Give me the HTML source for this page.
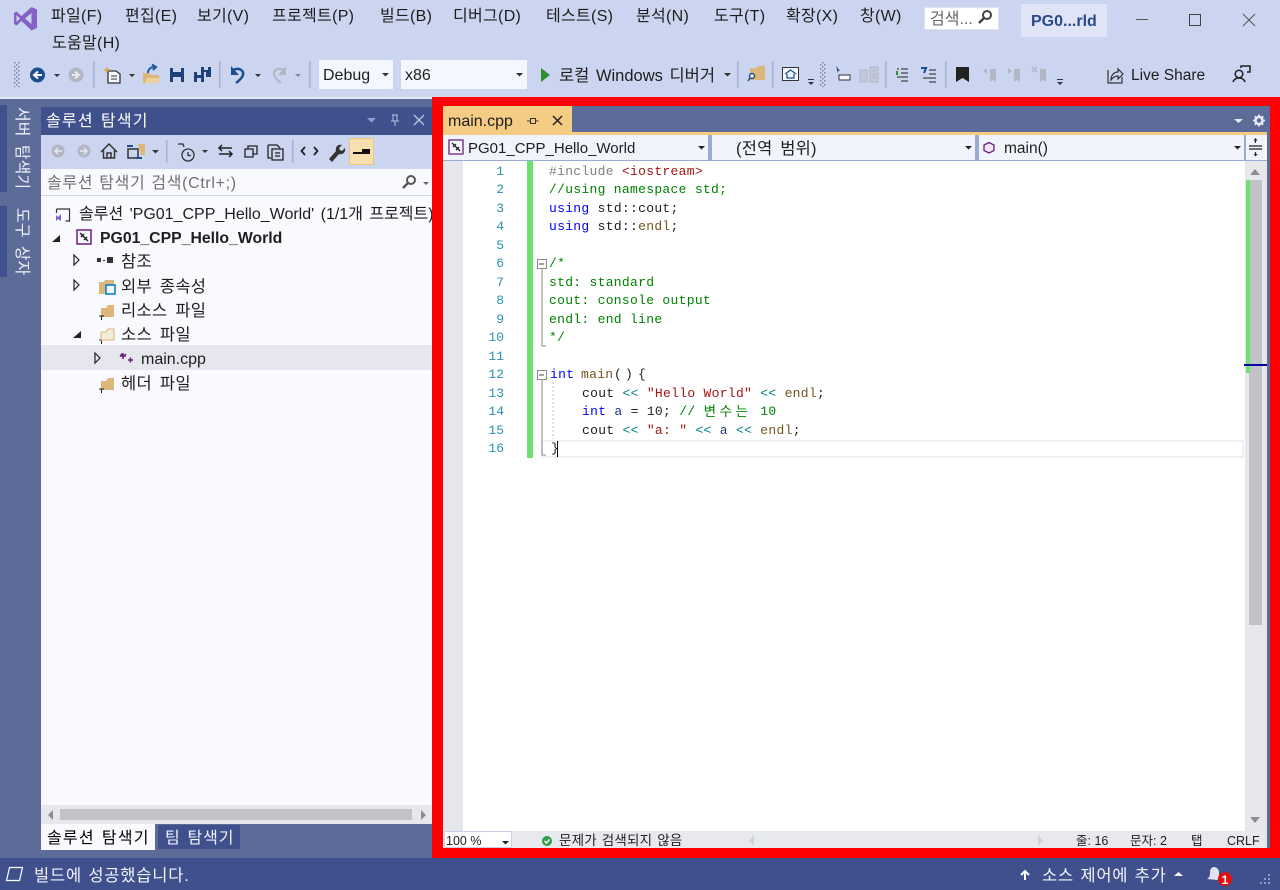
<!DOCTYPE html>
<html lang="ko"><head><meta charset="utf-8"><title>main.cpp</title>
<style>
html,body{margin:0;padding:0}
body{width:1280px;height:890px;position:relative;overflow:hidden;background:#5d6b99;font-family:"Liberation Sans","Noto Sans CJK KR",sans-serif;color:#1e1e1e}
div,span.t{position:absolute}
.t{white-space:nowrap;line-height:20px;font-size:16px;margin-top:1.5px}
.m{font-size:16px;letter-spacing:.3px}
.s{font-size:16px;letter-spacing:1.2px;word-spacing:1.5px}
.h{font-size:16.5px;letter-spacing:.3px;word-spacing:3px}
.q{font-size:16.5px;letter-spacing:.8px;word-spacing:1px}
.u{font-size:13.5px;margin-top:1px}
.c{position:absolute;white-space:pre;font:13px/18px "Liberation Mono","Noto Sans CJK KR",monospace;letter-spacing:.3px;color:#1e1e1e;margin-top:.5px}
.n{position:absolute;left:470px;width:34px;text-align:right;font:13px/18px "Liberation Mono",monospace;color:#2b91af;margin-top:.5px}
.g{color:#008000}.b{color:#0000ff}.r{color:#a31515}.p{color:#808080}.f{color:#74531f}.o{color:#008080}.v{color:#1f377f}
.k{display:inline-block;width:48.6px;font:13.5px/18px "Noto Sans CJK KR",sans-serif;letter-spacing:3.6px;color:#008000;vertical-align:top;position:relative;top:-2px}
svg{position:absolute;left:0;top:0}
</style></head><body>
<div style="left:0;top:0;width:1280px;height:97px;background:#ccd5f0"></div>
<div style="left:0;top:97px;width:433px;height:2px;background:#e6ebf8"></div>
<div style="left:0;top:99px;width:433px;height:8px;background:#5d6b99"></div>

<span class="t m" style="left:51px;top:5px">파일(F)</span>
<span class="t m" style="left:125px;top:5px">편집(E)</span>
<span class="t m" style="left:197px;top:5px">보기(V)</span>
<span class="t m" style="left:272px;top:5px">프로젝트(P)</span>
<span class="t m" style="left:380px;top:5px">빌드(B)</span>
<span class="t m" style="left:453px;top:5px">디버그(D)</span>
<span class="t m" style="left:546px;top:5px">테스트(S)</span>
<span class="t m" style="left:636px;top:5px">분석(N)</span>
<span class="t m" style="left:714px;top:5px">도구(T)</span>
<span class="t m" style="left:786px;top:5px">확장(X)</span>
<span class="t m" style="left:860px;top:5px">창(W)</span>
<span class="t m" style="left:52px;top:32px">도움말(H)</span>

<div style="left:924px;top:7px;width:75px;height:23px;background:#fff;border:1px solid #dfe4f3;box-sizing:border-box"></div>
<span class="t" style="left:930px;top:8px;color:#666">검색...</span>
<div style="left:1021px;top:4px;width:86px;height:33px;background:#dfe5f7"></div>
<span class="t" style="left:1031px;top:10px;font-weight:bold;color:#2a4a8c">PG0...rld</span>

<div style="left:319px;top:60px;width:74px;height:29px;background:#f5f7ff"></div>
<span class="t" style="left:323px;top:64px">Debug</span>
<div style="left:401px;top:60px;width:126px;height:29px;background:#f5f7ff"></div>
<span class="t" style="left:405px;top:64px">x86</span>
<span class="t" style="left:559px;top:64px;font-size:16.5px;word-spacing:2px">로컬 Windows 디버거</span>
<span class="t" style="left:1131px;top:64px;font-size:15.5px">Live Share</span>

<!-- left strip -->
<div style="left:0;top:105px;width:7px;height:87px;background:#40508d"></div>
<div style="left:0;top:206px;width:7px;height:71px;background:#40508d"></div>
<span class="t" style="left:11px;top:107px;margin-top:0;writing-mode:vertical-rl;text-orientation:sideways;color:#eef1fb;font-size:16px;line-height:20px;word-spacing:4px">서버 탐색기</span>
<span class="t" style="left:11px;top:208px;margin-top:0;writing-mode:vertical-rl;text-orientation:sideways;color:#eef1fb;font-size:16px;line-height:20px;word-spacing:4px">도구 상자</span>

<!-- solution panel -->
<div style="left:41px;top:107px;width:392px;height:28px;background:#40508d"></div>
<span class="t s" style="left:46px;top:110.500px;color:#fff">솔루션 탐색기</span>
<div style="left:41px;top:135px;width:392px;height:34px;background:#ccd5f0"></div>
<div style="left:41px;top:169px;width:392px;height:27px;background:#f9faff;border-bottom:1px solid #d5dbee;box-sizing:border-box"></div>
<span class="t" style="left:47px;top:172px;color:#717171;letter-spacing:.65px;word-spacing:1px">솔루션 탐색기 검색(Ctrl+;)</span>
<div style="left:41px;top:196px;width:392px;height:609px;background:#f9faff;overflow:hidden">
  <div style="left:0;top:149px;width:392px;height:25px;background:#e6e7ee"></div>
  <span class="t" style="left:38px;top:7px;word-spacing:2px">솔루션 'PG01_CPP_Hello_World' (1/1개 프로젝트)</span>
  <span class="t" style="left:59px;top:31px;font-weight:bold;font-size:15.800px">PG01_CPP_Hello_World</span>
  <span class="t h" style="left:80px;top:54px">참조</span>
  <span class="t h" style="left:80px;top:79px">외부 종속성</span>
  <span class="t h" style="left:80px;top:103px">리소스 파일</span>
  <span class="t h" style="left:80px;top:127px">소스 파일</span>
  <span class="t" style="left:100px;top:152px">main.cpp</span>
  <span class="t h" style="left:80px;top:176px">헤더 파일</span>
</div>
<div style="left:41px;top:805px;width:392px;height:19px;background:#e8e8ec"></div>
<div style="left:60px;top:809px;width:352px;height:11px;background:#c2c3c9"></div>
<div style="left:41px;top:824px;width:114px;height:26px;background:#f9faff"></div>
<span class="t s" style="left:47px;top:827.500px;color:#000">솔루션 탐색기</span>
<div style="left:158px;top:825px;width:82px;height:24px;background:#40508d"></div>
<span class="t s" style="left:165px;top:827.500px;color:#eef1fb;letter-spacing:.9px">팀 탐색기</span>

<!-- status -->
<div style="left:0;top:858px;width:1280px;height:32px;background:#40508d"></div>
<span class="t q" style="left:34px;top:864px;color:#f2f4fb">빌드에 성공했습니다.</span>
<span class="t q" style="left:1042px;top:864px;color:#f2f4fb">소스 제어에 추가</span>

<!-- editor frame -->
<div style="left:432px;top:97px;width:848px;height:761px;background:#ff0000"></div>
<div style="left:443px;top:106px;width:827px;height:742px;background:#5d6b99"></div>
<div style="left:443px;top:106px;width:129px;height:27px;background:#f5cc84"></div>
<div style="left:443px;top:132px;width:824px;height:3px;background:#f5cc84"></div>
<span class="t" style="left:448px;top:110px">main.cpp</span>
<div style="left:443px;top:135px;width:824px;height:26px;background:#f2f4fd"></div>
<div style="left:708px;top:135px;width:4px;height:26px;background:#9aaad2"></div>
<div style="left:975px;top:135px;width:4px;height:26px;background:#9aaad2"></div>
<div style="left:1244px;top:135px;width:2px;height:26px;background:#9aaad2"></div>
<div style="left:443px;top:160px;width:824px;height:1px;background:#9aaad2"></div>
<span class="t" style="left:468px;top:137px;font-size:15px">PG01_CPP_Hello_World</span>
<span class="t" style="left:736px;top:137px;font-size:16.500px;word-spacing:3px;letter-spacing:.2px">(전역 범위)</span>
<span class="t" style="left:1004px;top:137px;font-size:15.500px">main()</span>

<div style="left:443px;top:161px;width:824px;height:670px;background:#fff"></div>
<div style="left:443px;top:161px;width:20px;height:670px;background:#e6e7ed"></div>
<div style="left:527px;top:161px;width:6px;height:297px;background:#6ee06e"></div>
<div style="left:541px;top:440px;width:703px;height:18px;border:2px solid #eeeef5;box-sizing:border-box"></div>

<div class="n" style="top:162px">1</div><div class="n" style="top:180.5px">2</div><div class="n" style="top:199px">3</div><div class="n" style="top:217.5px">4</div>
<div class="n" style="top:236px">5</div><div class="n" style="top:254.5px">6</div><div class="n" style="top:273px">7</div><div class="n" style="top:291.5px">8</div>
<div class="n" style="top:310px">9</div><div class="n" style="top:328.5px">10</div><div class="n" style="top:347px">11</div><div class="n" style="top:365.5px">12</div>
<div class="n" style="top:384px">13</div><div class="n" style="top:402.5px">14</div><div class="n" style="top:421px">15</div><div class="n" style="top:439.5px">16</div>

<div class="c" style="left:549px;top:162px"><span class="p">#include </span><span class="r">&lt;iostream&gt;</span></div>
<div class="c g" style="left:549px;top:180.5px">//using namespace std;</div>
<div class="c" style="left:549px;top:199px"><span class="b">using</span> std::cout;</div>
<div class="c" style="left:549px;top:217.5px"><span class="b">using</span> std::<span class="f">endl</span>;</div>
<div class="c g" style="left:549px;top:254.5px">/*</div>
<div class="c g" style="left:549px;top:273px">std: standard</div>
<div class="c g" style="left:549px;top:291.5px">cout: console output</div>
<div class="c g" style="left:549px;top:310px">endl: end line</div>
<div class="c g" style="left:549px;top:328.5px">*/</div>
<div class="c b" style="left:550px;top:365.5px">int</div>
<div class="c f" style="left:581px;top:365.5px">main</div>
<div class="c" style="left:614px;top:365.5px">(</div>
<div class="c" style="left:625px;top:365.5px">)</div>
<div class="c" style="left:638px;top:365.5px">{</div>
<div class="c" style="left:582px;top:384px">cout <span class="o">&lt;&lt;</span> <span class="r">"Hello World"</span> <span class="o">&lt;&lt;</span> <span class="f">endl</span>;</div>
<div class="c" style="left:582px;top:402.5px"><span class="b">int</span> <span class="v">a</span> = 10; <span class="g">// </span><span class="k">변수는</span><span class="g"> 10</span></div>
<div class="c" style="left:582px;top:421px">cout <span class="o">&lt;&lt;</span> <span class="r">"a: "</span> <span class="o">&lt;&lt;</span> <span class="v">a</span> <span class="o">&lt;&lt;</span> <span class="f">endl</span>;</div>
<div class="c" style="left:551px;top:439.5px">}</div>
<div style="left:557px;top:441px;width:1px;height:16px;background:#000"></div>

<!-- editor scrollbar -->
<div style="left:1245px;top:161px;width:22px;height:670px;background:#e8e8ec"></div>
<div style="left:1249px;top:180px;width:13px;height:445px;background:#c2c3c9"></div>
<div style="left:1246px;top:180px;width:4px;height:193px;background:#6ee06e"></div>
<div style="left:1244px;top:364px;width:23px;height:2px;background:#00009e"></div>

<!-- editor bottom row -->
<div style="left:443px;top:831px;width:824px;height:17px;background:#e8e9ef"></div>
<div style="left:444px;top:831px;width:68px;height:17px;background:#fff;border:1px solid #c8d0e8;box-sizing:border-box"></div>
<span class="t u" style="left:446px;top:830px;font-size:12.500px">100 %</span>
<span class="t u" style="left:559px;top:830px;word-spacing:1px;letter-spacing:.2px">문제가 검색되지 않음</span>
<span class="t u" style="left:1076px;top:830px;font-size:12.500px">줄: 16</span>
<span class="t u" style="left:1130px;top:830px;font-size:12.500px">문자: 2</span>
<span class="t u" style="left:1191px;top:830px;font-size:12.500px">탭</span>
<span class="t u" style="left:1227px;top:830px;font-size:12.500px">CRLF</span>

<svg width="1280" height="890" viewBox="0 0 1280 890">
<defs>
<pattern id="grip" width="4" height="4" patternUnits="userSpaceOnUse"><rect width="1.500" height="1.500" fill="#7b86a6"/><rect x="2" y="2" width="1.500" height="1.500" fill="#7b86a6"/></pattern>
</defs>
<!-- logo -->
<path fill="#8561c5" fill-rule="evenodd" d="M31.500 7 37 9.500v18.500L31.500 30.500 21.500 21 16.500 25.500 14 24V13l2.500-1.500 5 4.500zM16.500 15v7l3.500-3.500zM31.500 13l-6.500 5.500 6.500 5.500z"/>
<!-- search magnifier -->
<g fill="none" stroke="#444" stroke-width="2"><circle cx="987" cy="15" r="4"/><path d="M984 18l-5 5" stroke-width="2.500"/></g>
<!-- window buttons -->
<path d="M1136 19.500h12" stroke="#555" fill="none"/>
<rect x="1189.500" y="14.500" width="11" height="11" fill="none" stroke="#444"/>
<path d="M1243 14l12 12M1255 14l-12 12" stroke="#555" fill="none"/>
<!-- grips -->
<rect x="14" y="62" width="6" height="25" fill="url(#grip)"/>
<rect x="820" y="62" width="6" height="25" fill="url(#grip)"/>
<!-- toolbar seps -->
<g fill="#a3b1d3"><rect x="93" y="61" width="1.500" height="27"/><rect x="219" y="61" width="1.500" height="27"/><rect x="309" y="61" width="1.500" height="27"/><rect x="737" y="61" width="1.500" height="27"/><rect x="772" y="61" width="1.500" height="27"/><rect x="885" y="61" width="1.500" height="27"/><rect x="945" y="61" width="1.500" height="27"/><rect x="166" y="140" width="1.500" height="23"/><rect x="292" y="140" width="1.500" height="23"/></g>
<!-- back/forward -->
<circle cx="37.500" cy="75" r="7.500" fill="#1c4e8d"/><path d="M42 75h-7M38 71.500 34 75l4 3.500" stroke="#fff" stroke-width="2" fill="none"/>
<circle cx="76" cy="75" r="7.500" fill="#b3b7c4"/><path d="M72 75h7M75 71.500 79 75l-4 3.500" stroke="#e9ebf2" stroke-width="2" fill="none"/>
<!-- drops -->
<g fill="#333"><path d="M54 74h6l-3 3zM129 74h6l-3 3zM255 74h6l-3 3zM382 73h7l-3.500 3.500zM516 73h7l-3.500 3.500zM724 73h7l-3.500 3.500zM152 150h7l-3.500 3.500zM202 150h6l-3 3z"/></g>
<path d="M295 74h6l-3 3z" fill="#888"/>
<!-- new project -->
<path d="M108 71h8l4 3v9h-12z" fill="#f5f7ff" stroke="#333" stroke-width="1.300"/>
<path d="M107 66l1 3 3 1-3 1-1 3-1-3-3-1 3-1z" fill="#d9a640"/><path d="M111 76h6M111 79h6" stroke="#333"/>
<!-- open -->
<path d="M143 73h6l2 2h8v8h-16z" fill="#dcb67a"/><path d="M145 83l2-5h13l-2 5z" fill="#efd19c"/>
<path d="M148 73c0-4 3-6 7-6M152 64.500 156 67l-3 3" stroke="#1c5a9c" stroke-width="2" fill="none"/>
<!-- save -->
<path fill="#1c4278" fill-rule="evenodd" d="M170 68h14v14h-14zM173 68v4h8v-4zM173 77v5h8v-5z"/>
<path fill="#1c4278" fill-rule="evenodd" d="M194 72h10v10h-10zM197 72v3h4v-3zM197 78v4h4v-4z"/><path fill="#1c4278" fill-rule="evenodd" d="M201 67h10v10h-5v-5h-5zM204 67v3h4v-3z"/>
<!-- undo / redo -->
<path d="M233 70c7-3 11 1 10 5-1 3-3 5-7 8" fill="none" stroke="#1c4e8d" stroke-width="2.500"/><path d="M231 66v9h8z" fill="#1c4e8d"/>
<path d="M284 70c-7-3-11 1-10 5 1 3 3 5 7 8" fill="none" stroke="#b3b7c4" stroke-width="2"/><path d="M286 66v9h-8z" fill="#b3b7c4"/>
<!-- play -->
<path d="M541 68l9 7-9 7z" fill="#2f8f2f"/>
<!-- find folder -->
<path d="M750 68h6l2-2h7v14h-15z" fill="#dcb67a"/><circle cx="752" cy="76" r="2.500" fill="#f5f7ff" stroke="#1c4e8d" stroke-width="1.500"/><path d="M750 78l-2 3" stroke="#1c4e8d" stroke-width="1.500"/>
<!-- home box -->
<rect x="782.500" y="67.500" width="16" height="13" fill="#f5f7ff" stroke="#333"/><path d="M785 74l5.500-4 5.500 4M787 74v4h7v-4" fill="none" stroke="#1c4e8d" stroke-width="1.300"/>
<g fill="#333"><rect x="808" y="79" width="6" height="1"/><path d="M808 82h6l-3 3z"/><rect x="1057" y="79" width="6" height="1"/><path d="M1057 82h6l-3 3z"/></g>
<!-- step icons -->
<path d="M836 66l4 5-2 0 0 3z" fill="#1c4e8d"/><path d="M839 75h11v5h-11z" fill="#f5f7ff" stroke="#333"/>
<path d="M860 70h7v12h-7zM870 67h8v15h-8zM872 71h4M872 74h4M872 77h4" fill="#c3c9d8" stroke="#b0b6c6"/>
<path d="M897 69h2M901 69h7M901 73h7M897 77h11M901 81h7" stroke="#222" fill="none"/><path d="M897 71v4" stroke="#2f8f2f" stroke-width="2"/>
<path d="M921 68h5l-2 5" fill="none" stroke="#1c4e8d" stroke-width="2"/><path d="M929 70h7M929 74h7M923 78h13M929 82h7" stroke="#222" fill="none"/>
<!-- bookmarks -->
<path d="M956 67h13v15l-6.500-4-6.500 4z" fill="#222"/>
<g fill="#b3b7c4"><path d="M990 69h6v13l-3-2-3 2zM983 71l4-3v6z"/><path d="M1014 69h6v13l-3-2-3 2zM1008 68l4 3-4 3z"/><path d="M1040 69h6v13l-3-2-3 2z"/></g>
<path d="M1032 67l5 5M1037 67l-5 5" stroke="#b3b7c4" stroke-width="1.500"/>
<!-- live share -->
<path d="M1108 70v13h14v-6" fill="none" stroke="#333" stroke-width="1.200"/><path d="M1111 80c0-5 3-8 7-8v-3l5 5-5 5v-3c-3 0-5 1-7 4z" fill="none" stroke="#333" stroke-width="1.200"/>
<!-- feedback person -->
<circle cx="1239" cy="74" r="3.800" fill="none" stroke="#222" stroke-width="1.500"/><path d="M1233 82c1-3 3-4 6-4s5 1 6 4" fill="none" stroke="#222" stroke-width="1.500"/><path d="M1241 68v-2h9v6h-3" fill="none" stroke="#222" stroke-width="1.500"/>

<!-- panel title -->
<path d="M367 118h9l-4.500 4.500z" fill="#8ea0cf"/>
<path d="M392 115h6M393 115v6h4v-6M391 121h8M395 121v5" stroke="#b8c4e4" fill="none"/>
<path d="M414 115l10 10M424 115l-10 10" stroke="#b8c4e4" stroke-width="1.400"/>
<!-- panel toolbar -->
<circle cx="58" cy="151" r="6.500" fill="#b3b7c4"/><path d="M62 151h-7M58 148l-3 3 3 3" stroke="#e5e8f2" stroke-width="1.500" fill="none"/>
<circle cx="84" cy="151" r="6.500" fill="#b3b7c4"/><path d="M80 151h7M84 148l3 3-3 3" stroke="#e5e8f2" stroke-width="1.500" fill="none"/>
<path d="M101 152l8-8 8 8M103.500 150v8h11v-8M107 158v-5h4v5" fill="none" stroke="#333" stroke-width="1.500"/>
<rect x="128" y="149" width="10" height="9" fill="none" stroke="#333" stroke-width="1.500"/><path d="M138 144h7v11h-4z" fill="#dcb67a"/><path d="M127 146h6M142 158h-6" stroke="#1c4e8d" stroke-width="2"/>
<circle cx="188" cy="155" r="6" fill="none" stroke="#333" stroke-width="1.300"/><path d="M188 152v3.500h3M178 144h5l1 3" fill="none" stroke="#333" stroke-width="1.300"/>
<path d="M219 148h13M222 145l-3 3 3 3M232 154h-13M229 151l3 3-3 3" fill="none" stroke="#222" stroke-width="1.500"/>
<path d="M245 149h8v8h-8zM248 149v-3h9v8h-4" fill="none" stroke="#222" stroke-width="1.300"/>
<path d="M268 145h9l3 3M268 145v13h3" fill="none" stroke="#222" stroke-width="1.300"/><path d="M272 149h11v11h-11zM275 153h5M275 156h5" fill="none" stroke="#222" stroke-width="1.300"/>
<path d="M305 147l-3.500 4 3.500 4M314 147l3.500 4-3.500 4" fill="none" stroke="#222" stroke-width="1.800"/>
<path d="M329 159l7-8c-1-4 2-7 6-6l-3 3 1 2 2 1 3-3c1 4-2 7-6 6l-7 8z" fill="#333"/>
<rect x="349.500" y="138.500" width="24" height="26" fill="#f7dfb0" stroke="#e6c77c"/>
<rect x="353" y="152" width="17" height="2" fill="#111"/><rect x="362" y="149" width="8" height="3" fill="#111"/>
<!-- search in panel -->
<circle cx="411" cy="180" r="4" fill="none" stroke="#555" stroke-width="2"/><path d="M408 183l-5 5" stroke="#555" stroke-width="2.500"/>
<path d="M423 182h6l-3 3z" fill="#666"/>
<!-- tree icons -->
<path d="M56.500 209h13v12h-4M56.500 213v-4" fill="none" stroke="#333" stroke-width="1.200"/><path d="M56 215l2 2 3-3v7l-3-2-2 2z" fill="#8561c5"/>
<path d="M52 242h8v-7z" fill="#222"/>
<rect x="77" y="230" width="14" height="14" fill="#f5f7ff" stroke="#68217a" stroke-width="1.500"/><path d="M80 233l4 4 4 4M81 237l3-3M84 240l3-3" stroke="#222" stroke-width="1.500" fill="none"/>
<g fill="none" stroke="#222" stroke-width="1.200"><path d="M74 255l5 5-5 5zM74 280l5 5-5 5zM95 353l5 5-5 5z"/></g>
<path d="M73 338h8v-7z" fill="#222"/>
<rect x="97" y="258" width="4" height="4" fill="#333"/><rect x="103" y="260" width="2" height="1" fill="#333"/><rect x="107" y="257" width="6" height="6" fill="#333"/>
<path d="M99 282h5l1-2h9v14H99z" fill="#dcb67a"/><rect x="106" y="285" width="9" height="9" fill="#f5f7ff" stroke="#0078d0" stroke-width="1.500"/>
<g fill="#dcb67a"><path d="M101 308h5l2-3h6v12h-13zM101 381h5l2-3h6v12h-13z"/></g>
<path d="M99 316h5M101.500 316v4M99 389h5M101.500 389v4M99 340h5M101.500 340v4" stroke="#222"/>
<path d="M101 332h5l2-3h6v11h-13z" fill="#f5ecd9" stroke="#dcb67a"/>
<path d="M120 356l2-2 2 2 2-2M120 356h6M123 353v6" stroke="#68217a" stroke-width="1.500" fill="none"/><path d="M128 360h5M130.500 357.500v5" stroke="#68217a" stroke-width="1.500"/>
<!-- hscroll arrows -->
<path d="M53 810v10l-5-5z" fill="#8a8d99"/><path d="M421 810v10l5-5z" fill="#8a8d99"/>
<!-- status -->
<path d="M9.500 867.500h13l-3 13h-13z" fill="none" stroke="#fff" stroke-width="1.200"/>
<path d="M1025 880v-9M1021 875l4-4 4 4" stroke="#fff" stroke-width="2" fill="none"/>
<path d="M1174 876h9l-4.500-4z" fill="#fff"/>
<path d="M1207 879c3-2 3-4 3-7 0-3 2-5 4-5s5 2 5 5v3l2 3-4 2z" fill="#dfe3f2"/><circle cx="1225" cy="879" r="7" fill="#e01010"/>
<text x="1225" y="884" text-anchor="middle" fill="#fff" font-family="Liberation Sans" font-weight="bold" font-size="12">1</text>
<g fill="#8f9ac0"><rect x="1268" y="882" width="2" height="2"/><rect x="1264" y="882" width="2" height="2"/><rect x="1260" y="882" width="2" height="2"/><rect x="1268" y="878" width="2" height="2"/><rect x="1264" y="878" width="2" height="2"/><rect x="1268" y="874" width="2" height="2"/></g>
<!-- editor tab -->
<path d="M527 121h3M530.500 118v6M530.500 118.500h5v5h-5M535.500 121h3" stroke="#333" fill="none" stroke-width="1"/>
<path d="M553 116l9 9M562 116l-9 9" stroke="#222" stroke-width="1.500"/>
<path d="M1234 119h9l-4.500 4z" fill="#e6ebf8"/>
<circle cx="1259" cy="120.500" r="3.500" fill="none" stroke="#e6ebf8" stroke-width="2.500"/><path d="M1259 114.500v2M1259 124.500v2M1253 120.500h2M1263 120.500h2M1254.800 116.300l1.400 1.400M1261.800 123.300l1.400 1.400M1263.200 116.300l-1.400 1.400M1256.200 123.300l-1.400 1.400" stroke="#e6ebf8" stroke-width="1.800"/>
<!-- nav bar -->
<rect x="449" y="140" width="14" height="14" fill="#f5f7ff" stroke="#68217a" stroke-width="1.300"/><path d="M452 143l8 8M453 147l3-3M456 150l3-3" stroke="#222" stroke-width="1.300" fill="none"/>
<path d="M698 146h7l-3.500 3.500zM965 146h7l-3.500 3.500zM1234 146h7l-3.500 3.500z" fill="#222"/>
<path d="M989 142.500l5 2.500v5.500l-5 2.500-5-2.500V145z" fill="#f0e6f5" stroke="#68217a" stroke-width="1.300"/>
<path d="M1249 146h13M1249 149h13M1255.500 143v-4M1255.500 152v4" stroke="#222" stroke-width="1.200"/><path d="M1253.500 140.500l2-2.500 2 2.500zM1253.500 154l2 2.500 2-2.500z" fill="#222"/>
<!-- fold markers -->
<g fill="none" stroke="#8a8a8a"><rect x="537.500" y="259.500" width="9" height="9" fill="#fff"/><rect x="537.500" y="370.500" width="9" height="9" fill="#fff"/><path d="M542 269v77h4M542 380v75h4"/></g>
<path d="M539 264h5M539 375h5" stroke="#444"/>
<path d="M553 382v57" stroke="#c4c4c4" stroke-dasharray="2 2" fill="none"/>
<!-- v scroll arrows -->
<path d="M1250 175h10l-5-6z" fill="#8a8d99"/><path d="M1250 817h10l-5 6z" fill="#8a8d99"/>
<!-- bottom row -->
<path d="M502 841h7l-3.500 3.500z" fill="#222"/>
<circle cx="547" cy="841" r="5" fill="#2f9e44"/><path d="M544.500 841l2 2 3-3.500" stroke="#fff" stroke-width="1.500" fill="none"/>
<path d="M754 835v11l-5-5.500z" fill="#cfd1d8"/><path d="M1038 835v11l5-5.500z" fill="#cfd1d8"/>
</svg>
</body></html>
